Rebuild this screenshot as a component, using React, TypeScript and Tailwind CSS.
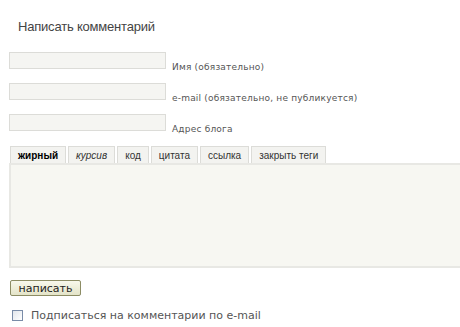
import { useState } from "react";

const FIELDS = [
  { name: "author", label: "Имя (обязательно)" },
  { name: "email", label: "e-mail (обязательно, не публикуется)" },
  { name: "url", label: "Адрес блога" },
];

const TAGS = [
  { label: "жирный", cls: "font-bold text-black" },
  { label: "курсив", cls: "italic" },
  { label: "код", cls: "" },
  { label: "цитата", cls: "" },
  { label: "ссылка", cls: "" },
  { label: "закрыть теги", cls: "" },
];

export default function App() {
  const [text, setText] = useState("");
  const [subscribe, setSubscribe] = useState(false);

  return (
    <div className="bg-white w-[460px] h-[327px] overflow-hidden pl-[9px] text-[#444] font-['DejaVu_Sans',Verdana,sans-serif]">
      <h3 className="pt-[19px] pl-[9px] text-[13px] leading-[16px] tracking-[-0.2px] text-[#444] font-['Liberation_Sans',Arial,sans-serif]">
        Написать комментарий
      </h3>

      <form onSubmit={(e) => e.preventDefault()} className="pt-[17px]">
        {FIELDS.map((f) => (
          <p key={f.name} className="flex items-end mb-[14px]">
            <input
              type="text"
              name={f.name}
              className="w-[157px] h-[17px] bg-[#f5f5f2] border border-[#dcdcd8] outline-none"
            />
            <label className="ml-[6px] text-[9px] leading-[4px] tracking-[0.2px] text-[#555]">{f.label}</label>
          </p>
        ))}

        <div className="flex gap-[2px] pt-[1px] pl-[1px] font-['Liberation_Sans',Arial,sans-serif]">
          {TAGS.map((t) => (
            <button
              key={t.label}
              type="button"
              className={`h-[17px] px-[7px] text-[10px] leading-[15px] bg-[#f3f3f0] border border-[#dcdcd8] border-b-0 text-[#333] ${t.cls}`}
            >
              {t.label}
            </button>
          ))}
        </div>
        <textarea
          value={text}
          onChange={(e) => setText(e.target.value)}
          className="block w-[470px] h-[105px] bg-[#f7f7f2] border-2 border-[#e8e8e4] outline-none resize-none"
        />

        <div className="flex pt-[12px] pl-[1px]">
          <button
            type="submit"
            className="h-[16px] w-[71px] text-[11px] leading-[13px] text-[#222] rounded-[2px] border border-[#8c8c64] bg-gradient-to-b from-[#f8f8ec] to-[#e4e4c8]"
          >
            написать
          </button>
        </div>

        <label className="flex items-center mt-[13px] pl-[3px] text-[11px] leading-[13px] text-[#555]">
          <input
            type="checkbox"
            checked={subscribe}
            onChange={(e) => setSubscribe(e.target.checked)}
            className="appearance-none w-[11px] h-[11px] border border-[#7a8ca8] bg-gradient-to-br from-[#e2e6ec] to-white"
          />
          <span className="ml-[8px]">Подписаться на комментарии по e-mail</span>
        </label>
      </form>
    </div>
  );
}
